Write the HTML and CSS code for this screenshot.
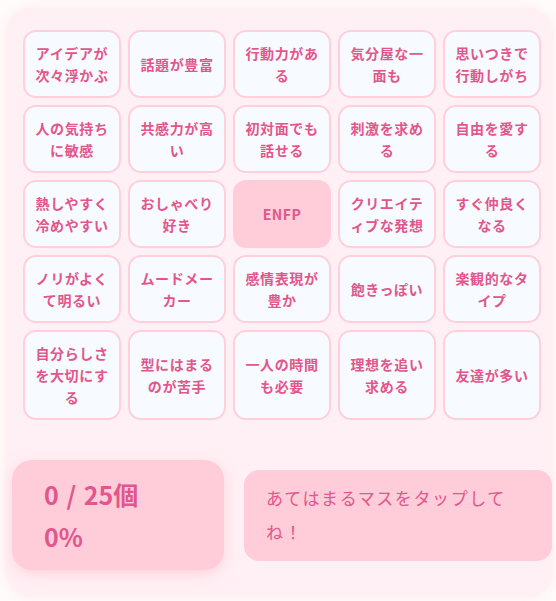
FILE: index.html
```html
<!DOCTYPE html>
<html lang="ja">
<head>
    <meta charset="UTF-8">
    <meta name="viewport" content="width=device-width, initial-scale=1.0">
    <title>ENFP ビンゴ</title>
    <link rel="stylesheet" href="styles.css">
</head>
<body>
<div class="board">
    <div class="bingo-grid">
        <div class="cell">アイデアが次々浮かぶ</div>
        <div class="cell">話題が豊富</div>
        <div class="cell">行動力がある</div>
        <div class="cell">気分屋な一面も</div>
        <div class="cell">思いつきで行動しがち</div>
        <div class="cell">人の気持ちに敏感</div>
        <div class="cell">共感力が高い</div>
        <div class="cell">初対面でも話せる</div>
        <div class="cell">刺激を求める</div>
        <div class="cell">自由を愛する</div>
        <div class="cell">熱しやすく冷めやすい</div>
        <div class="cell">おしゃべり好き</div>
        <div class="cell free">ENFP</div>
        <div class="cell">クリエイティブな発想</div>
        <div class="cell">すぐ仲良くなる</div>
        <div class="cell">ノリがよくて明るい</div>
        <div class="cell">ムードメーカー</div>
        <div class="cell">感情表現が豊か</div>
        <div class="cell">飽きっぽい</div>
        <div class="cell">楽観的なタイプ</div>
        <div class="cell">自分らしさを大切にする</div>
        <div class="cell">型にはまるのが苦手</div>
        <div class="cell">一人の時間も必要</div>
        <div class="cell">理想を追い求める</div>
        <div class="cell">友達が多い</div>
    </div>

    <div class="footer">
        <div class="stats">
            <div class="stat-count"><span class="checked">0</span> / 25個</div>
            <div class="stat-percent">0%</div>
        </div>
        <div class="message">あてはまるマスをタップしてね！</div>
    </div>
</div>
<script>
    document.addEventListener('DOMContentLoaded', () => {
        const cells = document.querySelectorAll('.cell:not(.free)');
        const checked = document.querySelector('.checked');
        const percent = document.querySelector('.stat-percent');

        cells.forEach((cell) => {
            cell.addEventListener('click', () => {
                cell.classList.toggle('on');
                const count = document.querySelectorAll('.cell.on').length;
                checked.textContent = count;
                percent.textContent = `${Math.round((count / 25) * 100)}%`;
            });
        });
    });
</script>
</body>
</html>
```

FILE: styles.css
```css
/* Page */
body {
    margin: 0;
    background: #fffafb;
    font-family: "Noto Sans CJK JP", "Noto Sans", sans-serif;
    color: #e2568b;
}

.board {
    margin: 8px 3px 4px 6px;
    padding: 22px 0 27px 0;
    background: #fff0f5;
    border-radius: 26px;
    box-shadow: 0 0 10px rgba(255, 190, 205, 0.25);
}

/* Grid */
.bingo-grid {
    display: grid;
    grid-template-columns: repeat(5, 98px);
    gap: 7px;
    margin-left: 17px;
}

.cell {
    display: flex;
    align-items: center;
    justify-content: center;
    text-align: center;
    min-height: 44px;
    padding: 10px 6px;
    background: #f7fbff;
    border: 2px solid #ffd0dc;
    border-radius: 13px;
    font-size: 14px;
    font-weight: 700;
    line-height: 22px;
    letter-spacing: 0.6px;
    cursor: pointer;
}

.cell.free {
    background: #ffccd9;
    border-color: #ffccd9;
    letter-spacing: 0.5px;
}

.cell.on {
    background: #ffccd9;
}

/* Footer */
.footer {
    display: flex;
    align-items: center;
    gap: 20px;
    margin: 40px 1px 0 6px;
}

.stats {
    width: 148px;
    padding: 13px 32px;
    background: #ffccd9;
    border-radius: 20px;
    box-shadow: 0 4px 14px rgba(255, 182, 200, 0.5);
    font-size: 25px;
    font-weight: 700;
    line-height: 42px;
}

.stat-count {
    word-spacing: 2px;
}

.message {
    flex: 1;
    padding: 11px 22px 12px;
    background: #ffccd9;
    border-radius: 15px;
    font-size: 17px;
    line-height: 34px;
    letter-spacing: 1.6px;
}
```
